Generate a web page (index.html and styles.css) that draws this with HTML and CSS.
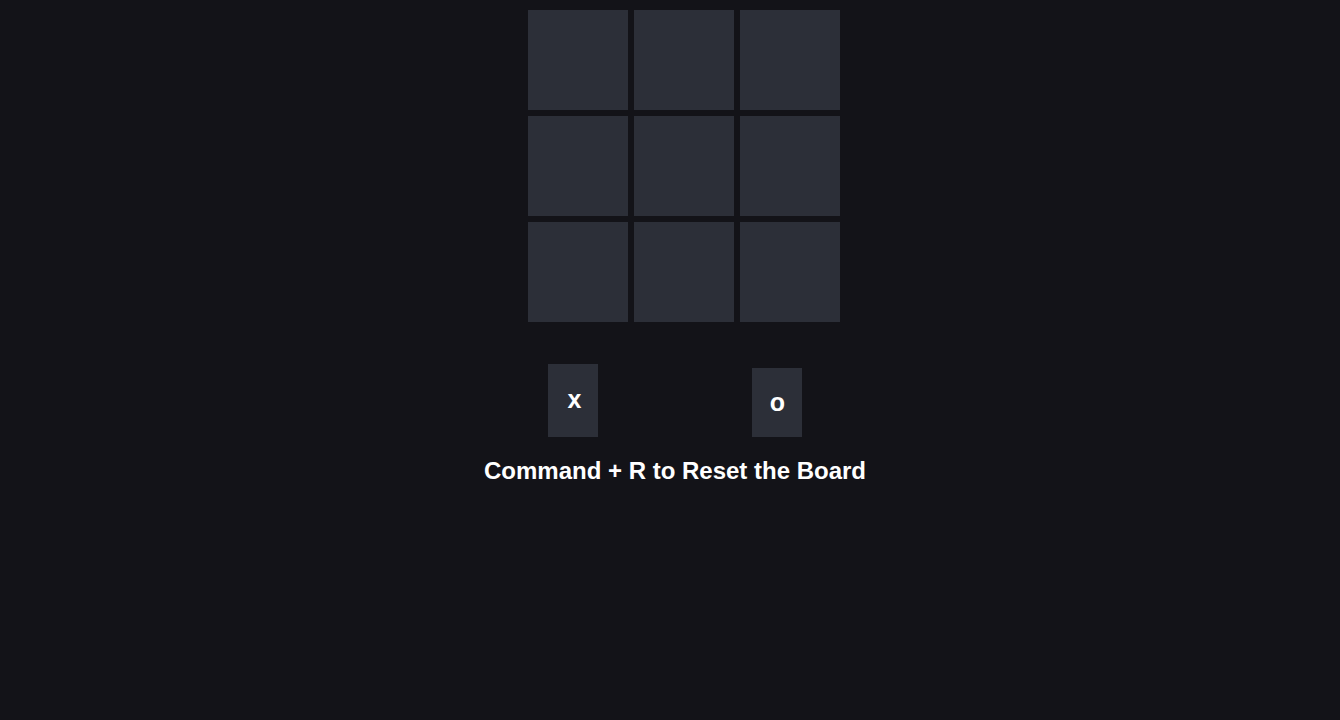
FILE: index.html
```html
<!DOCTYPE html>
<html>
<head>
<meta charset="utf-8">
<link rel="stylesheet" href="styles.css">
</head>
<body>
<div class="page">
  <div class="board-wrap">
    <div class="board">
      <div class="cell"></div><div class="cell"></div><div class="cell"></div>
      <div class="cell"></div><div class="cell"></div><div class="cell"></div>
      <div class="cell"></div><div class="cell"></div><div class="cell"></div>
    </div>
  </div>
  <div class="players">
    <div class="player player-x">x</div>
    <div class="player player-o">o</div>
  </div>
  <div class="hint">Command + R to Reset the Board</div>
</div>
</body>
</html>
```
FILE: styles.css
```css
html, body {
  margin: 0;
  padding: 0;
  background: #131318;
  height: 100%;
}
.page {
  display: flex;
  flex-direction: column;
  align-items: center;
  font-family: "Liberation Sans", Arial, sans-serif;
  color: #ffffff;
}
.board-wrap {
  display: flex;
  justify-content: center;
  padding-top: 10px;
  padding-left: 28px;
}
.board {
  display: grid;
  grid-template-columns: repeat(3, 100px);
  grid-template-rows: repeat(3, 100px);
  gap: 6px;
}
.cell {
  background: #2c2f38;
}
.players {
  display: flex;
  align-items: flex-end;
  gap: 154px;
  margin-top: 42px;
  padding-left: 10px;
}
.player {
  width: 50px;
  background: #2c2f38;
  display: flex;
  align-items: center;
  justify-content: center;
  font-weight: bold;
  font-size: 25px;
  line-height: 1;
  box-sizing: border-box;
}
.player-x {
  height: 73px;
  padding-left: 3px;
  padding-bottom: 2px;
}
.player-o {
  height: 69px;
  padding-left: 1px;
}
.hint {
  margin-top: 20px;
  font-weight: bold;
  font-size: 24px;
  padding-left: 10px;
}
```
